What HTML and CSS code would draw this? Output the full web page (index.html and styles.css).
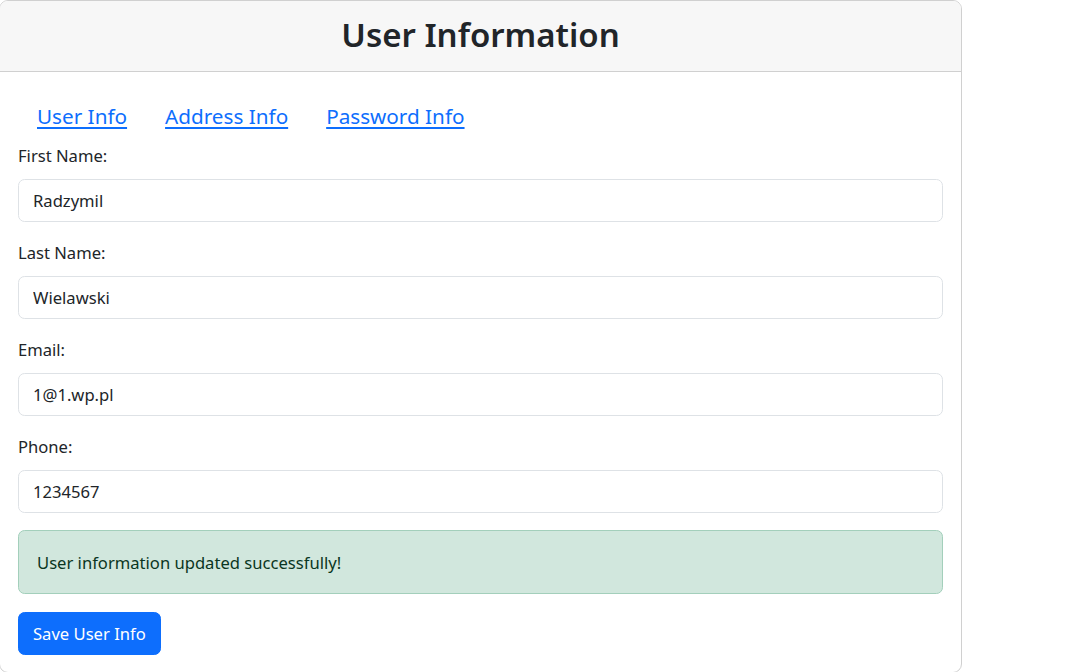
FILE: index.html
```html
<!DOCTYPE html>
<html lang="en">
<head>
<meta charset="utf-8">
<title>User Information</title>
<link rel="stylesheet" href="styles.css">
</head>
<body>
<div class="card">
  <div class="card-header">
    <h1 class="title">User Information</h1>
  </div>
  <div class="card-body">
    <nav class="tabs">
      <a href="#" class="tab">User Info</a>
      <a href="#" class="tab">Address Info</a>
      <a href="#" class="tab">Password Info</a>
    </nav>
    <form class="form">
      <div class="group">
        <label class="label" for="fn">First Name:</label>
        <input class="control" id="fn" type="text" value="Radzymil">
      </div>
      <div class="group">
        <label class="label" for="ln">Last Name:</label>
        <input class="control" id="ln" type="text" value="Wielawski">
      </div>
      <div class="group">
        <label class="label" for="em">Email:</label>
        <input class="control" id="em" type="text" value="1@1.wp.pl">
      </div>
      <div class="group">
        <label class="label" for="ph">Phone:</label>
        <input class="control" id="ph" type="text" value="1234567">
      </div>
      <div class="alert">User information updated successfully!</div>
      <button type="button" class="btn">Save User Info</button>
    </form>
  </div>
</div>
</body>
</html>
```

FILE: styles.css
```css
html, body {
  margin: 0;
  padding: 0;
  background: #fff;
}
body {
  font-family: "Segoe UI", "Noto Sans", "Open Sans", sans-serif;
  color: #212529;
  font-size: 16.6px;
  overflow: hidden;
}
.card {
  box-sizing: border-box;
  width: 963px;
  height: 673px;
  margin-left: -1px;
  border: 1px solid #d0d0d0;
  border-radius: 9px;
  overflow: hidden;
  display: flex;
  flex-direction: column;
}
.card-header {
  height: 70px;
  background: #f7f7f7;
  border-bottom: 1px solid #d0d0d0;
  display: flex;
  align-items: center;
  justify-content: center;
}
.title {
  margin: 0 0 2px 0;
  font-size: 33px;
  font-weight: 600;
  line-height: 1.2;
  color: #212529;
}
.card-body {
  padding: 18px 18px 0 18px;
}
.tabs {
  display: flex;
}
.tab {
  font-size: 20.7px;
  line-height: 31px;
  padding: 11px 19px 11px;
  color: #0d6efd;
  text-decoration: underline;
  text-underline-offset: 3px;
}
.form {
  display: flex;
  flex-direction: column;
  align-items: stretch;
}
.group {
  display: flex;
  flex-direction: column;
  margin-bottom: 18px;
}
.label {
  font-size: 16.6px;
  line-height: 26px;
  margin-bottom: 10px;
}
.control {
  box-sizing: border-box;
  width: 925px;
  height: 43px;
  padding: 0 14px;
  border: 1px solid #dee2e6;
  border-radius: 6.6px;
  font-family: inherit;
  font-size: 16.6px;
  color: #212529;
  background: #fff;
  outline: none;
}
.alert {
  box-sizing: border-box;
  width: 925px;
  height: 64px;
  margin-top: -1px;
  margin-bottom: 18px;
  padding: 0 18px;
  display: flex;
  align-items: center;
  background: #d1e7dd;
  border: 1px solid #a3cfbb;
  border-radius: 6.6px;
  color: #0a3622;
  font-size: 16.6px;
}
.btn {
  align-self: flex-start;
  box-sizing: border-box;
  height: 43px;
  padding: 0 14px;
  background: #0d6efd;
  color: #fff;
  border: 1px solid #0d6efd;
  border-radius: 6.6px;
  font-family: inherit;
  font-size: 16.6px;
  cursor: pointer;
}
```
